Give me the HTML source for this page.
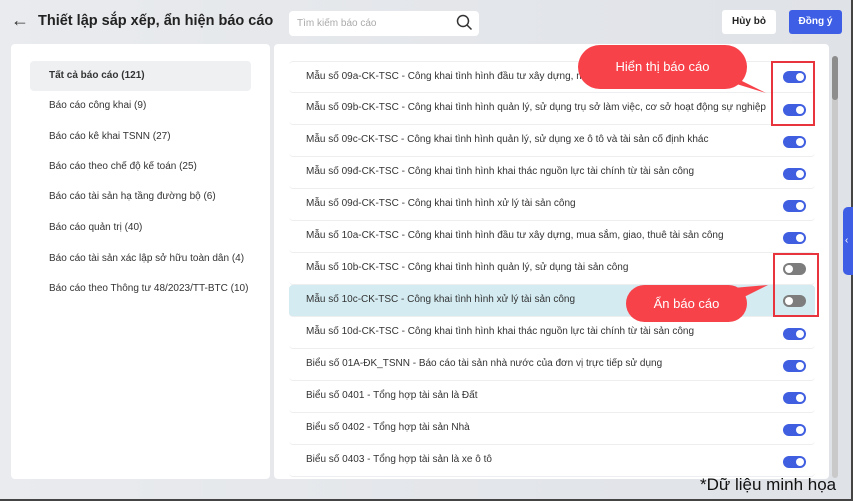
<!DOCTYPE html>
<html><head><meta charset="utf-8"><style>
*{margin:0;padding:0;box-sizing:border-box}
body{width:853px;height:501px;overflow:hidden;background:linear-gradient(90deg,#e9ebee,#dfe2e7);font-family:"Liberation Sans",sans-serif;position:relative;border-right:2px solid #444;border-bottom:2px solid #444}
.abs{position:absolute;white-space:nowrap}
.title{left:38px;top:13px;font-size:14.5px;font-weight:bold;color:#222}
.back{left:11px;top:10px;font-size:18px;color:#333}
.search{left:289px;top:11px;width:190px;height:25px;background:#fff;border-radius:4px;font-size:10px;color:#aaa;padding:7px 0 0 8px}
.btn{top:10px;height:24px;border-radius:3px;font-size:10px;font-weight:bold;text-align:center;line-height:24px}
.lp{left:11px;top:44px;width:259px;height:435px;background:#fff;border-radius:4px}
.rp{left:274px;top:44px;width:555px;height:435px;background:#fff;border-radius:4px}
.li{left:30px;width:221px;height:30px;font-size:10px;color:#333;padding-left:19px;line-height:30px}
.row{left:289px;width:526px;height:32px;border-bottom:1px solid #eceef0;font-size:10px;color:#333;padding-left:17px;line-height:30px;border-radius:4px;overflow:hidden}
.tg{left:783px;width:23px;height:12px;border-radius:6px;background:#3f5ee0}
.tg::after{content:"";position:absolute;top:2px;left:13px;width:8px;height:8px;border-radius:50%;background:#fff}
.tg.off{background:#7d7d7d}
.tg.off::after{left:2px}
.bub{background:#f7424a;color:#fff;font-size:13px;text-align:center;border-radius:20px}
.box{border:2px solid #e8343c}
</style></head><body>
<div class="abs back">←</div>
<div class="abs title">Thiết lập sắp xếp, ẩn hiện báo cáo</div>
<div class="abs search">Tìm kiếm báo cáo</div>
<svg class="abs" style="left:456px;top:14px" width="17" height="17" viewBox="0 0 17 17"><circle cx="7" cy="7" r="5.5" fill="none" stroke="#333" stroke-width="1.5"/><path d="M11 11l4.5 4.5" stroke="#333" stroke-width="1.5"/></svg>
<div class="abs btn" style="left:722px;width:54px;background:#fff;color:#222">Hủy bỏ</div>
<div class="abs btn" style="left:789px;width:53px;background:#3e5ee6;color:#fff">Đồng ý</div>
<div class="abs lp"></div>
<div class="abs rp"></div>
<div class="abs li" style="top:61px;background:#eef0f2;border-radius:4px;font-weight:bold">Tất cả báo cáo (121)</div>
<div class="abs li" style="top:91px">Báo cáo công khai (9)</div>
<div class="abs li" style="top:122px">Báo cáo kê khai TSNN (27)</div>
<div class="abs li" style="top:152px">Báo cáo theo chế độ kế toán (25)</div>
<div class="abs li" style="top:182px">Báo cáo tài sản hạ tầng đường bộ (6)</div>
<div class="abs li" style="top:213px">Báo cáo quản trị (40)</div>
<div class="abs li" style="top:244px">Báo cáo tài sản xác lập sở hữu toàn dân (4)</div>
<div class="abs li" style="top:274px">Báo cáo theo Thông tư 48/2023/TT-BTC (10)</div>

<div class="abs row" style="top:61px;border-top:1px solid #eceef0">Mẫu số 09a-CK-TSC - Công khai tình hình đầu tư xây dựng, mua sắm</div>
<div class="abs row" style="top:93px">Mẫu số 09b-CK-TSC - Công khai tình hình quản lý, sử dụng trụ sở làm việc, cơ sở hoạt động sự nghiệp</div>
<div class="abs row" style="top:125px">Mẫu số 09c-CK-TSC - Công khai tình hình quản lý, sử dụng xe ô tô và tài sản cố định khác</div>
<div class="abs row" style="top:157px">Mẫu số 09đ-CK-TSC - Công khai tình hình khai thác nguồn lực tài chính từ tài sản công</div>
<div class="abs row" style="top:189px">Mẫu số 09d-CK-TSC - Công khai tình hình xử lý tài sản công</div>
<div class="abs row" style="top:221px">Mẫu số 10a-CK-TSC - Công khai tình hình đầu tư xây dựng, mua sắm, giao, thuê tài sản công</div>
<div class="abs row" style="top:253px">Mẫu số 10b-CK-TSC - Công khai tình hình quản lý, sử dụng tài sản công</div>
<div class="abs row" style="top:285px;background:#d3ebf1">Mẫu số 10c-CK-TSC - Công khai tình hình xử lý tài sản công</div>
<div class="abs row" style="top:317px">Mẫu số 10d-CK-TSC - Công khai tình hình khai thác nguồn lực tài chính từ tài sản công</div>
<div class="abs row" style="top:349px">Biểu số 01A-ĐK_TSNN - Báo cáo tài sản nhà nước của đơn vị trực tiếp sử dụng</div>
<div class="abs row" style="top:381px">Biểu số 0401 - Tổng hợp tài sản là Đất</div>
<div class="abs row" style="top:413px">Biểu số 0402 - Tổng hợp tài sản Nhà</div>
<div class="abs row" style="top:445px">Biểu số 0403 - Tổng hợp tài sản là xe ô tô</div>

<div class="abs tg" style="top:71px"></div>
<div class="abs tg" style="top:104px"></div>
<div class="abs tg" style="top:136px"></div>
<div class="abs tg" style="top:168px"></div>
<div class="abs tg" style="top:200px"></div>
<div class="abs tg" style="top:232px"></div>
<div class="abs tg off" style="top:263px"></div>
<div class="abs tg off" style="top:295px"></div>
<div class="abs tg" style="top:328px"></div>
<div class="abs tg" style="top:360px"></div>
<div class="abs tg" style="top:392px"></div>
<div class="abs tg" style="top:424px"></div>
<div class="abs tg" style="top:456px"></div>

<div class="abs" style="left:832px;top:56px;width:6px;height:422px;background:#c9c9c9;border-radius:3px"></div>
<div class="abs" style="left:832px;top:56px;width:6px;height:44px;background:#8d8d8d;border-radius:3px"></div>
<div class="abs" style="left:843px;top:207px;width:10px;height:68px;background:#3e5ee6;border-radius:5px 0 0 5px;color:#fff;font-size:10px;line-height:68px;padding-left:2px">‹</div>

<svg class="abs" style="left:700px;top:60px" width="70" height="40"><path d="M10 5 L66 33 L30 22 Z" fill="#f7424a"/></svg>
<div class="abs bub" style="left:578px;top:45px;width:169px;height:44px;line-height:44px;border-radius:22px">Hiển thị báo cáo</div>
<svg class="abs" style="left:700px;top:282px" width="70" height="30"><path d="M10 8 L68 3 L30 22 Z" fill="#f7424a"/></svg>
<div class="abs bub" style="left:626px;top:285px;width:121px;height:37px;line-height:37px;border-radius:19px">Ẩn báo cáo</div>
<div class="abs box" style="left:771px;top:61px;width:44px;height:65px"></div>
<div class="abs box" style="left:773px;top:253px;width:46px;height:64px"></div>

<div class="abs" style="left:700px;top:475px;font-size:17px;color:#111">*Dữ liệu minh họa</div>
</body></html>
